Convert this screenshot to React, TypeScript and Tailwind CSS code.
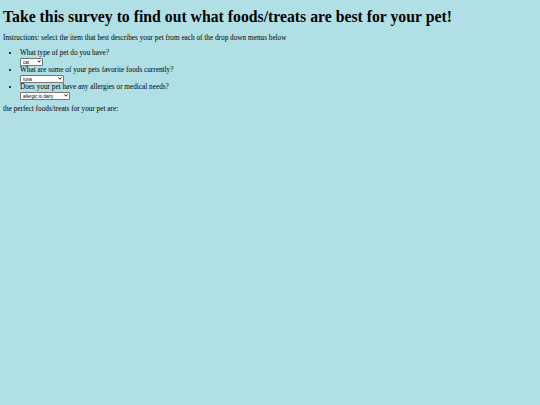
function Dropdown({ value, width }: { value: string; width: string }) {
  return (
    <span className={`relative inline-block h-[8px] ${width} align-top`}>
      <select className="h-full w-full appearance-none rounded-[1px] border-[0.5px] border-[#767676] bg-white pl-[2px] text-[4.5px] leading-[7px] font-['Liberation_Sans',sans-serif] text-black">
        <option>{value}</option>
      </select>
      <svg
        className="pointer-events-none absolute right-[2px] top-[2.5px] h-[3px] w-[4px]"
        viewBox="0 0 8 6"
        fill="none"
        stroke="#000"
        strokeWidth="1.8"
      >
        <path d="M1 1l3 3.5L7 1" />
      </svg>
    </span>
  );
}

export default function App() {
  return (
    <div className="min-h-[405px] bg-[#b0e0e6] px-[3px] pt-[7px] text-black font-['Liberation_Serif',serif]">
      <h1 className="whitespace-nowrap text-[15.75px] leading-[20px] font-bold">
        Take this survey to find out what foods/treats are best for your pet!
      </h1>
      <p className="mt-[7px] whitespace-nowrap text-[7.25px] leading-[9px]">
        Instructions: select the item that best describes your pet from each of the drop down menus below
      </p>
      <ul className="mt-[6px] ml-[17px] list-disc text-[7.25px] leading-[8.5px]">
        <li>
          What type of pet do you have?
          <br />
          <Dropdown value="cat" width="w-[23px]" />
        </li>
        <li>
          What are some of your pets favorite foods currently?
          <br />
          <Dropdown value="tuna" width="w-[44px]" />
        </li>
        <li>
          Does your pet have any allergies or medical needs?
          <br />
          <Dropdown value="allergic to dairy" width="w-[50px]" />
        </li>
      </ul>
      <p className="mt-[5px] text-[7.25px] leading-[9px]">the perfect foods/treats for your pet are:</p>
    </div>
  );
}
